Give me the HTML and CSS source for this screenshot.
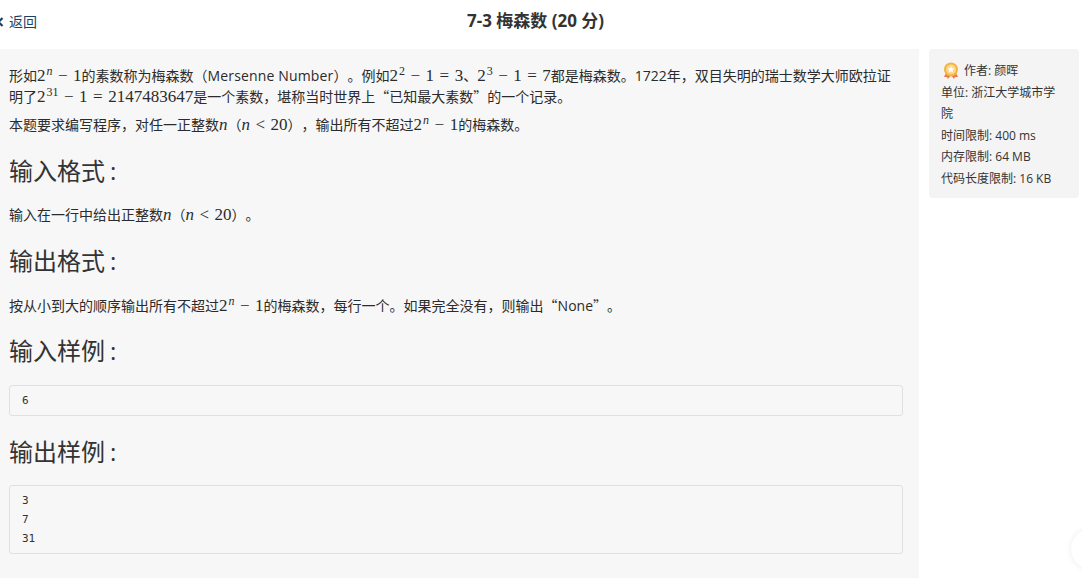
FILE: index.html
```html
<!DOCTYPE html>
<html lang="zh">
<head>
<meta charset="utf-8">
<title>7-3 梅森数</title>
<link rel="stylesheet" href="styles.css">
</head>
<body>
<header class="top">
  <a class="back" href="#"><svg class="chev" width="8" height="10" viewBox="0 0 8 10"><path d="M6.500 1 2.500 5l4 4" fill="none" stroke="#1d3f66" stroke-width="2.200"/></svg>返回</a>
  <h1 class="title">7-3 梅森数 (20 分)</h1>
</header>
<div class="layout">
  <main class="problem">
    <p class="para first">形如<span class="m">2<sup>n</sup><i class="op">−</i>1</span>的素数称为梅森数（<span class="latin">Mersenne Number</span>）。例如<span class="m">2<sup class="up">2</sup><i class="op">−</i>1<i class="op">=</i>3</span>、<span class="m">2<sup class="up">3</sup><i class="op">−</i>1<i class="op">=</i>7</span>都是梅森数。1722年，双目失明的瑞士数学大师欧拉证明了<span class="m">2<sup class="up">31</sup><i class="op">−</i>1<i class="op">=</i>2147483647</span>是一个素数，堪称当时世界上<span class="cjk">“</span>已知最大素数<span class="cjk">”</span>的一个记录。</p>
    <p class="para">本题要求编写程序，对任一正整数<span class="m"><em>n</em></span>（<span class="m"><em>n</em><i class="op">&lt;</i>20</span>），输出所有不超过<span class="m">2<sup>n</sup><i class="op">−</i>1</span>的梅森数。</p>
    <h2 class="head">输入格式<span class="colon">:</span></h2>
    <p class="para">输入在一行中给出正整数<span class="m"><em>n</em></span>（<span class="m"><em>n</em><i class="op">&lt;</i>20</span>）。</p>
    <h2 class="head">输出格式<span class="colon">:</span></h2>
    <p class="para">按从小到大的顺序输出所有不超过<span class="m">2<sup>n</sup><i class="op">−</i>1</span>的梅森数，每行一个。如果完全没有，则输出<span class="cjk">“</span>None<span class="cjk">”</span>。</p>
    <h2 class="head sample sample-in">输入样例<span class="colon">:</span></h2>
    <pre class="code">6</pre>
    <h2 class="head sample">输出样例<span class="colon">:</span></h2>
    <pre class="code">3
7
31</pre>
  </main>
  <aside class="info">
    <div class="author"><svg class="medal" width="16" height="18" viewBox="0 0 16 18"><path d="M3 11 1 15h3l1 2 3-4 3 4 1-2h3l-2-4z" fill="#f0764a"/><circle cx="8" cy="7.500" r="7" fill="#f5b342"/><circle cx="8" cy="7.500" r="5" fill="#fbd98a"/><path d="m8 4 1 2.300 2.400.2-1.800 1.600.6 2.400L8 9.200l-2.200 1.300.6-2.400-1.800-1.600 2.400-.2z" fill="#fff"/></svg>作者: 颜晖</div>
    <div>单位: 浙江大学城市学院</div>
    <div>时间限制: 400 ms</div>
    <div>内存限制: 64 MB</div>
    <div>代码长度限制: 16 KB</div>
  </aside>
</div>
<div class="float"></div>
</body>
</html>
```
FILE: styles.css
```css
* { box-sizing: border-box; }
html, body { margin: 0; height: 578px; overflow: hidden; background: #fff; }
body { font-family: "Open Sans", "Noto Sans CJK SC", sans-serif; color: #2b2b2b; text-spacing-trim: space-all; }
.top { width: 1071px; height: 49px; display: flex; align-items: center; justify-content: center; position: relative; }
.back { position: absolute; left: -4px; top: 13px; display: flex; align-items: center; gap: 5px; font-size: 14px; line-height: 18px; color: #1d3f66; text-decoration: none; }
.title { margin: 0 0 7px; font-size: 17px; font-weight: 700; line-height: 22px; color: #333; }
.layout { display: flex; gap: 10px; align-items: flex-start; }
.problem { width: 919px; height: 529px; padding: 16px 16px 0 9px; background: #f7f7f7; }
.para { margin: 0 0 6.500px; font-size: 14px; line-height: 21px; }
.cjk { font-family: "Noto Sans CJK SC", sans-serif; }
.latin { letter-spacing: .15px; }
.m { font-family: "Liberation Serif", serif; font-size: 17px; line-height: 1; }
.m sup { font-size: 12px; font-style: italic; line-height: 0; vertical-align: 6px; margin-left: 1px; }
.m sup.up { font-style: normal; }
.m em { font-style: italic; }
.op { font-style: normal; margin: 0 5.500px; }
.head { margin: 19px 0 17.500px; font-size: 24px; font-weight: 400; line-height: 33px; color: #333; }
.head.sample { margin: 18px 0 16.500px; }
.head.sample-in { margin-bottom: 18.500px; }
.colon { margin-left: 5px; }
.code { margin: 0 0 19px; padding: 5px 12px; border: 1px solid #e0e0e0; border-radius: 3px; font-family: "DejaVu Sans Mono", monospace; font-size: 11px; line-height: 19px; color: #333; }
.info { width: 150px; height: 149px; padding: 11px 12px; background: #f4f4f4; border-radius: 4px; font-size: 12px; line-height: 21.500px; color: #333; }
.author { display: flex; align-items: center; gap: 5px; margin-left: 2px; }
.medal { flex: none; }
.float { position: absolute; left: 1071px; top: 529px; width: 40px; height: 40px; border-radius: 50%; background: #fff; box-shadow: 0 0 6px rgba(0,0,0,.08); }
```
